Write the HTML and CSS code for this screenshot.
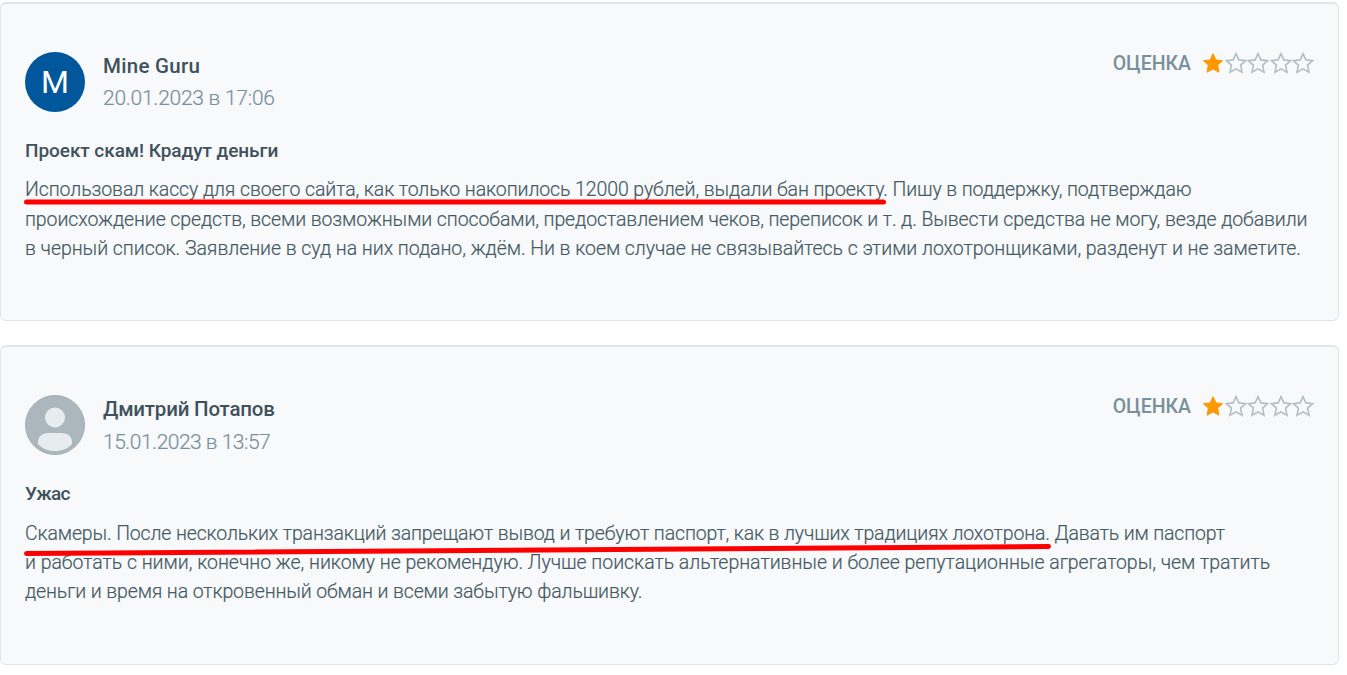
FILE: index.html
```
<!DOCTYPE html>
<html lang="ru">
<head>
    <meta charset="UTF-8">
    <meta name="viewport" content="width=device-width, initial-scale=1.0">
    <title>Отзывы</title>
    <link rel="stylesheet" href="styles.css">
</head>
<body>

<svg class="sprite">
    <symbol id="star" viewBox="0 0 22 22">
        <path d="M11 1.7 L13.9 7.9 L20.6 8.6 L15.6 13.1 L17 20.2 L11 16.9 L5 20.2 L6.4 13.1 L1.4 8.6 L8.1 7.9 Z"/>
    </symbol>
</svg>

<div class="reviews">
    <div class="review">
        <div class="header">
            <div class="avatar avatar-letter">M</div>
            <div class="author">
                <div class="name n1">Mine Guru</div>
                <div class="date d1">20.01.2023 в 17:06</div>
            </div>
            <div class="rating">
                <span class="rating-label">ОЦЕНКА</span>
                <div class="stars">
                    <svg class="star filled"><use href="#star"/></svg>
                    <svg class="star"><use href="#star"/></svg>
                    <svg class="star"><use href="#star"/></svg>
                    <svg class="star"><use href="#star"/></svg>
                    <svg class="star"><use href="#star"/></svg>
                </div>
            </div>
        </div>
        <h3 class="title t1">Проект скам! Крадут деньги</h3>
        <div class="text">
            <span class="line l1"><span class="marked">Использовал кассу для своего сайта, как только накопилось 12000 рублей, выдали бан проекту.<svg class="mark mark-straight" viewBox="0 0 863 14"><path d="M3 7 H860"/></svg></span> Пишу в поддержку, подтверждаю</span>
            <span class="line l2">происхождение средств, всеми возможными способами, предоставлением чеков, переписок и т. д. Вывести средства не могу, везде добавили</span>
            <span class="line l3">в черный список. Заявление в суд на них подано, ждём. Ни в коем случае не связывайтесь с этими лохотронщиками, разденут и не заметите.</span>
        </div>
    </div>

    <div class="review">
        <div class="header">
            <div class="avatar">
                <svg viewBox="0 0 60 60"><circle cx="30" cy="22.5" r="10"/><path d="M13 47 C13 41 18 38 23 38 H37 C42 38 47 41 47 47 V49 C43 53.500 37 56 30 56 C23 56 17 53.500 13 49 Z"/></svg>
            </div>
            <div class="author">
                <div class="name n2">Дмитрий Потапов</div>
                <div class="date d2">15.01.2023 в 13:57</div>
            </div>
            <div class="rating">
                <span class="rating-label">ОЦЕНКА</span>
                <div class="stars">
                    <svg class="star filled"><use href="#star"/></svg>
                    <svg class="star"><use href="#star"/></svg>
                    <svg class="star"><use href="#star"/></svg>
                    <svg class="star"><use href="#star"/></svg>
                    <svg class="star"><use href="#star"/></svg>
                </div>
            </div>
        </div>
        <h3 class="title t2">Ужас</h3>
        <div class="text">
            <span class="line l4"><span class="marked">Скамеры. После нескольких транзакций запрещают вывод и требуют паспорт, как в лучших традициях лохотрона.<svg class="mark mark-slanted" viewBox="0 0 1028 14"><path d="M3 10.500 L1025 3.500"/></svg></span> Давать им паспорт</span>
            <span class="line l5">и работать с ними, конечно же, никому не рекомендую. Лучше поискать альтернативные и более репутационные агрегаторы, чем тратить</span>
            <span class="line l6">деньги и время на откровенный обман и всеми забытую фальшивку.</span>
        </div>
    </div>
</div>

</body>
</html>
```
FILE: styles.css
```
* {
    box-sizing: border-box;
}
body {
    font-family: Roboto, "Liberation Sans", sans-serif;
    background-color: #fff;
    color: #455a64;
    margin: 0;
    padding: 0;
}
.sprite {
    display: none;
}
.reviews {
    width: 1339px;
    padding-top: 2px;
    display: flex;
    flex-direction: column;
    gap: 24px;
}
.review {
    height: 319.4px;
    padding: 48px 24px 0;
    background-color: #f8f9fb;
    border: 1px solid #e1e5e8;
    border-top-width: 2px;
    border-radius: 6px;
}
.header {
    display: flex;
    height: 60px;
}
.avatar {
    width: 60px;
    height: 60px;
    border-radius: 50%;
    background-color: #abb7bd;
    border: 1px solid #a2afb5;
    overflow: hidden;
}
.avatar svg {
    display: block;
    width: 60px;
    height: 60px;
    margin: -1px;
    fill: #e7ecee;
}
.avatar-letter {
    background-color: #01579b;
    border: none;
    color: #fff;
    font-size: 32px;
    line-height: 61px;
    text-align: center;
}
.author {
    margin-left: 18px;
    flex: 1;
}
.name {
    font-size: 20.5px;
    font-weight: 500;
    line-height: 28px;
    color: #3f525b;
}
.date {
    margin-top: 4.3px;
    font-size: 21px;
    font-weight: 300;
    line-height: 28px;
    color: #78909c;
    -webkit-text-stroke: 0.2px;
}
.rating {
    display: flex;
    height: 22px;
}
.rating-label {
    font-size: 19.5px;
    font-weight: 500;
    line-height: 23px;
    color: #78909c;
    margin-right: 11px;
}
.stars {
    display: flex;
    gap: 0.5px;
}
.star {
    width: 22px;
    height: 22px;
    fill: none;
    stroke: #b0bec5;
    stroke-width: 1.6;
}
.star.filled {
    fill: #ff9800;
    stroke: #ff9800;
    stroke-width: 1;
}
.title {
    margin: 26px 0 0;
    font-size: 19px;
    font-weight: 500;
    line-height: 25px;
    color: #3f525b;
}
.text {
    margin-top: 12.2px;
    font-size: 19.5px;
    font-weight: 300;
    line-height: 29.4px;
    -webkit-text-stroke: 0.2px;
}
.line {
    display: block;
    white-space: nowrap;
}
/* tracking */
.n1 { letter-spacing: 0.28px; }
.n2 { letter-spacing: -0.2px; }
.d1 { letter-spacing: -0.25px; }
.d2 { letter-spacing: -0.5px; }
.t1 { letter-spacing: -0.06px; }
.t2 { letter-spacing: -0.75px; }
.l1 { letter-spacing: -0.1px; }
.l2 { letter-spacing: -0.103px; }
.l3 { letter-spacing: -0.052px; }
.l4 { letter-spacing: -0.145px; }
.l5 { letter-spacing: -0.035px; }
.l6 { letter-spacing: -0.125px; }
.marked {
    position: relative;
}
/* red marker stroke under the phrase */
.mark {
    position: absolute;
    left: -2px;
    height: 14px;
    fill: none;
    stroke: #f00;
    stroke-width: 5;
    stroke-linecap: round;
}
.mark-straight {
    bottom: -8px;
    width: 864px;
}
.mark-slanted {
    bottom: -12px;
    width: 1029px;
}
```
